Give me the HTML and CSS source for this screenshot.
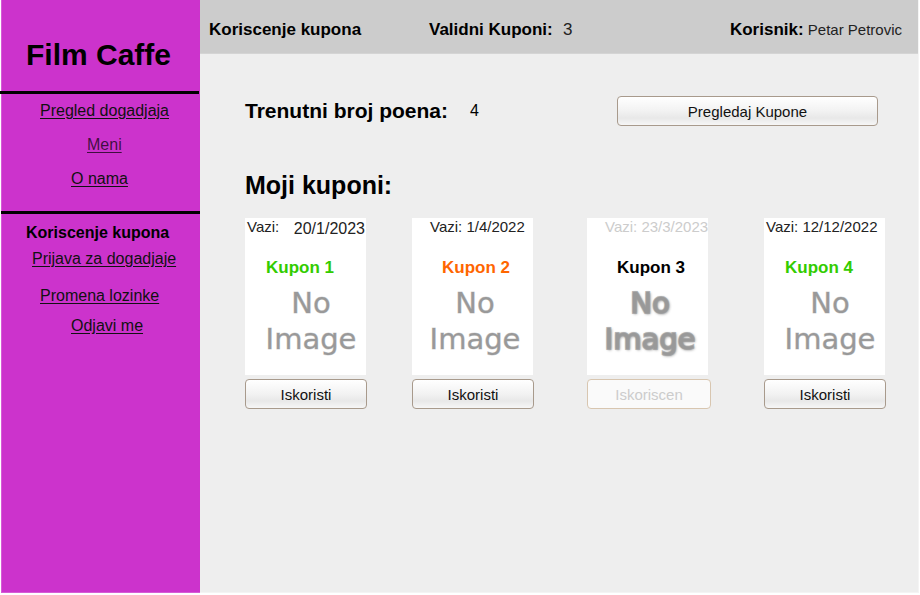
FILE: index.html
```html
<!DOCTYPE html>
<html lang="sr">
<head>
<meta charset="utf-8">
<title>Film Caffe</title>
<link rel="stylesheet" href="styles.css">
</head>
<body>
<div class="app">
  <aside class="sidebar">
    <h1 class="brand">Film Caffe</h1>
    <nav class="menu menu-main">
      <a class="indent-2" href="#">Pregled dogadjaja</a>
      <a class="indent-4 muted" href="#">Meni</a>
      <a class="indent-3" href="#">O nama</a>
    </nav>
    <nav class="menu menu-account">
      <strong>Koriscenje kupona</strong>
      <a class="indent-1" href="#">Prijava za dogadjaje</a>
      <a class="indent-2 group-start" href="#">Promena lozinke</a>
      <a class="indent-3" href="#">Odjavi me</a>
    </nav>
  </aside>
  <div class="page">
    <header class="topbar">
      <strong class="topbar-title">Koriscenje kupona</strong>
      <div class="valid"><strong>Validni Kuponi:</strong> <span>3</span></div>
      <div class="user"><strong>Korisnik:</strong> <span>Petar Petrovic</span></div>
    </header>
    <main class="content">
      <div class="points">
        <h2>Trenutni broj poena:</h2>
        <span class="points-value">4</span>
        <button class="btn btn-wide" type="button">Pregledaj Kupone</button>
      </div>
      <h2 class="section-title">Moji kuponi:</h2>
      <div class="coupons">
        <article class="coupon">
          <div class="card">
            <p class="date split"><span>Vazi:</span> <span class="large">20/1/2023</span></p>
            <h3 class="green">Kupon 1</h3>
            <p class="picture"><span>No</span><span>Image</span></p>
          </div>
          <button class="btn" type="button">Iskoristi</button>
        </article>
        <article class="coupon inset">
          <div class="card">
            <p class="date">Vazi: 1/4/2022</p>
            <h3 class="orange">Kupon 2</h3>
            <p class="picture"><span>No</span><span>Image</span></p>
          </div>
          <button class="btn" type="button">Iskoristi</button>
        </article>
        <article class="coupon inset used">
          <div class="card">
            <p class="date">Vazi: 23/3/2023</p>
            <h3>Kupon 3</h3>
            <p class="picture"><span>No</span><span>Image</span></p>
          </div>
          <button class="btn" type="button" disabled>Iskoriscen</button>
        </article>
        <article class="coupon">
          <div class="card">
            <p class="date">Vazi: 12/12/2022</p>
            <h3 class="green">Kupon 4</h3>
            <p class="picture"><span>No</span><span>Image</span></p>
          </div>
          <button class="btn" type="button">Iskoristi</button>
        </article>
      </div>
    </main>
  </div>
</div>
</body>
</html>
```

FILE: styles.css
```css
* {
  box-sizing: border-box;
}

body {
  margin: 0;
  background: #fff;
  color: #000;
  font: 15px/18px "Liberation Sans", Arial, sans-serif;
}

h1, h2, h3, p {
  margin: 0;
}

.app {
  display: grid;
  grid-template-columns: 200px 1fr;
  min-height: 100vh;
  padding: 0 1px 2px 0;
}

/* Sidebar */
.sidebar {
  margin-left: 1px;
  background: #cc33cc;
  border-left: 1px solid #d65cd6;
  border-bottom: 1px solid #d65cd6;
}

.brand {
  margin: 0 1px 0 -2px;
  padding: 37px 0 18px 26px;
  border-bottom: 3px solid #000;
  font-size: 30px;
  line-height: 36px;
}

.menu {
  display: flex;
  flex-direction: column;
  align-items: flex-start;
  margin-left: -1px;
  font-size: 16px;
}

.menu a {
  color: #111;
  text-underline-offset: 2px;
}

.menu a.muted {
  color: rgba(0, 0, 0, 0.7);
}

.menu-main {
  line-height: 34px;
  height: 117px;
}

.menu-account {
  padding: 6px 0 0 25px;
  border-top: 3px solid #000;
  line-height: 26px;
}

.menu-main .indent-2 { margin-left: 39px; }
.menu-main .indent-3 { margin-left: 70px; }
.menu-main .indent-4 { margin-left: 86px; }
.menu-account .indent-1 { margin-left: 6px; }
.menu-account .indent-2 { margin-left: 14px; }
.menu-account .indent-3 { margin-left: 45px; }

.menu-account .group-start {
  margin-top: 11px;
  margin-bottom: 4px;
}

/* Top bar */
.page {
  background: #eee;
  border-right: 1px solid #f4f4f4;
  border-bottom: 1px solid #f4f4f4;
}

.topbar {
  display: grid;
  grid-template-columns: 220px 1fr auto;
  align-items: center;
  height: 54px;
  padding: 6px 16px 0 9px;
  background: #ccc;
  border-bottom: 1px solid #d4d4d4;
}

.topbar strong {
  font-size: 17px;
}

.valid span {
  margin-left: 6px;
  font-size: 17px;
}

.valid span,
.user span {
  color: #222;
}

/* Content */
.content {
  padding: 42px 32px 0 45px;
}

.points {
  display: flex;
  align-items: center;
  margin-right: 8px;
}

.points h2 {
  font-size: 21px;
}

.points-value {
  margin-left: 22px;
  font-size: 16px;
}

.btn {
  height: 30px;
  padding: 1px 0 0;
  border: 1px solid #a89a8c;
  border-radius: 4px;
  background: linear-gradient(#fff, #f2f2f2 50%, #e8e8e8 75%, #f6f6f6);
  color: #111;
  font: inherit;
}

.btn-wide {
  width: 261px;
  margin-left: auto;
}

.section-title {
  margin-top: 44px;
  font-size: 25px;
  line-height: 30px;
}

.coupons {
  display: grid;
  grid-template-columns: 167fr 175fr 177fr 122px;
  margin-top: 18px;
}

.coupon {
  display: flex;
  flex-direction: column;
  align-items: flex-start;
  gap: 4px;
}

.coupon .btn {
  width: 122px;
}

.card {
  width: 121px;
  height: 157px;
  overflow: hidden;
  background: #fff;
}

.date {
  padding-left: 2px;
  line-height: 18px;
  white-space: nowrap;
  color: #222;
}

.split {
  display: flex;
  justify-content: space-between;
  padding-right: 1px;
}

.large {
  font-size: 16px;
  line-height: 22px;
}

.card h3 {
  height: 20px;
  margin-left: 21px;
  font-size: 17px;
  line-height: 20px;
}

.date:not(.split) + h3 { margin-top: 22px; }
.split + h3 { margin-top: 18px; }

.picture {
  display: flex;
  flex-direction: column;
  align-items: center;
  width: 92px;
  margin: 7px 0 0 20px;
  color: #999;
  font: 29px/36px "DejaVu Sans", sans-serif;
  -webkit-text-stroke: 1px rgba(153, 153, 153, 0.4);
}

.inset .date { padding-left: 18px; }
.inset h3 { margin-left: 30px; }
.inset .picture { margin-left: 17px; }

.green { color: #33cc00; }
.orange { color: #ff6600; }

.used .date {
  color: #ccc;
}

.used .picture {
  -webkit-text-stroke: 2px rgba(153, 153, 153, 0.7);
  text-shadow: 0 0 2px #999, 1px 1px 3px #888;
}

.used .btn {
  width: 124px;
  border-color: #d8c6b0;
  background: #fafafa;
  color: #ccc;
}
```
